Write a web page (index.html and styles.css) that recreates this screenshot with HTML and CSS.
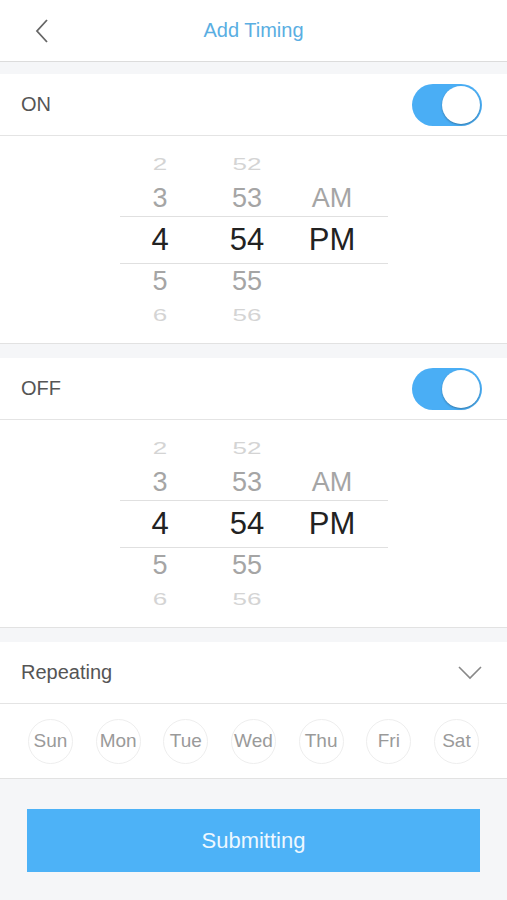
FILE: index.html
```html
<!DOCTYPE html>
<html lang="en">
<head>
    <meta charset="UTF-8">
    <meta name="viewport" content="width=device-width, initial-scale=1.0">
    <title>Add Timing</title>
    <link rel="stylesheet" href="styles.css">
</head>
<body>
    <div class="header">
        <span class="back">
            <svg width="14" height="24" viewBox="0 0 14 24"><path d="M12 1 L2 12 L12 23" fill="none" stroke="#666" stroke-width="1.8"/></svg>
        </span>
        <span class="title">Add Timing</span>
    </div>

    <div class="section">
        <div class="row">
            <span class="label">ON</span>
            <span class="toggle"><span class="knob"></span></span>
        </div>
        <div class="picker">
            <div class="wheel far"><span>2</span><span>52</span><span></span></div>
            <div class="wheel near"><span>3</span><span>53</span><span>AM</span></div>
            <div class="wheel sel"><span>4</span><span>54</span><span>PM</span></div>
            <div class="wheel near"><span>5</span><span>55</span><span></span></div>
            <div class="wheel far"><span>6</span><span>56</span><span></span></div>
        </div>
    </div>

    <div class="section">
        <div class="row">
            <span class="label">OFF</span>
            <span class="toggle"><span class="knob"></span></span>
        </div>
        <div class="picker">
            <div class="wheel far"><span>2</span><span>52</span><span></span></div>
            <div class="wheel near"><span>3</span><span>53</span><span>AM</span></div>
            <div class="wheel sel"><span>4</span><span>54</span><span>PM</span></div>
            <div class="wheel near"><span>5</span><span>55</span><span></span></div>
            <div class="wheel far"><span>6</span><span>56</span><span></span></div>
        </div>
    </div>

    <div class="section">
        <div class="row">
            <span class="label">Repeating</span>
            <svg width="24" height="14" viewBox="0 0 24 14"><path d="M1 1 L12 12 L23 1" fill="none" stroke="#888" stroke-width="1.6"/></svg>
        </div>
        <div class="days">
            <span class="day">Sun</span>
            <span class="day">Mon</span>
            <span class="day">Tue</span>
            <span class="day">Wed</span>
            <span class="day">Thu</span>
            <span class="day">Fri</span>
            <span class="day">Sat</span>
        </div>
    </div>

    <div class="footer">
        <button class="submit">Submitting</button>
    </div>
</body>
</html>
```

FILE: styles.css
```css
body {
    margin: 0;
    font-family: "Liberation Sans", Arial, sans-serif;
    background-color: #f5f6f8;
    color: #555;
}
.header {
    height: 61px;
    background: #fff;
    border-bottom: 1px solid #dcdcdc;
    display: flex;
    align-items: center;
    justify-content: center;
    position: relative;
}
.back {
    position: absolute;
    left: 35px;
    top: 19px;
    display: flex;
}
.title {
    font-size: 20px;
    color: #5aaee2;
}
.section {
    margin-top: 14px;
    background: #fff;
    border-bottom: 1px solid #e2e2e2;
}
.header + .section {
    margin-top: 12px;
}
.row {
    height: 61px;
    padding: 0 25px 0 21px;
    display: flex;
    align-items: center;
    justify-content: space-between;
    border-bottom: 1px solid #e4e4e4;
}
.label {
    font-size: 20px;
    color: #555;
}
.toggle {
    width: 70px;
    height: 42px;
    border-radius: 21px;
    background: #4aaef5;
    display: flex;
    align-items: center;
    justify-content: flex-end;
    padding-right: 2px;
    box-sizing: border-box;
}
.knob {
    width: 38px;
    height: 38px;
    border-radius: 50%;
    background: #fff;
    box-shadow: 0 1px 2px rgba(0, 0, 0, 0.3);
}
.picker {
    height: 207px;
    padding: 12px 0 0 120px;
    box-sizing: border-box;
}
.wheel {
    width: 268px;
    display: grid;
    grid-template-columns: 80px 94px 76px;
    align-items: center;
    text-align: center;
}
.far {
    height: 33px;
    font-size: 26px;
    color: #d4d4d4;
}
.far span {
    transform: scaleY(0.6);
}
.near {
    height: 35px;
    font-size: 27px;
    color: #a5a5a5;
}
.sel {
    height: 46px;
    font-size: 31px;
    color: #222;
    border-top: 1px solid #e0e0e0;
    border-bottom: 1px solid #e0e0e0;
}
.days {
    height: 74px;
    padding: 0 28px;
    display: flex;
    align-items: center;
    justify-content: space-between;
}
.day {
    width: 45px;
    height: 45px;
    border-radius: 50%;
    border: 1px solid #eeeeee;
    box-sizing: border-box;
    display: flex;
    align-items: center;
    justify-content: center;
    font-size: 19px;
    color: #9a9a9a;
}
.footer {
    padding: 30px 27px;
}
.submit {
    width: 100%;
    height: 63px;
    border: none;
    background: #4db2f7;
    color: #eef8ff;
    font-family: "Liberation Sans", Arial, sans-serif;
    font-size: 22px;
    cursor: pointer;
}
```
